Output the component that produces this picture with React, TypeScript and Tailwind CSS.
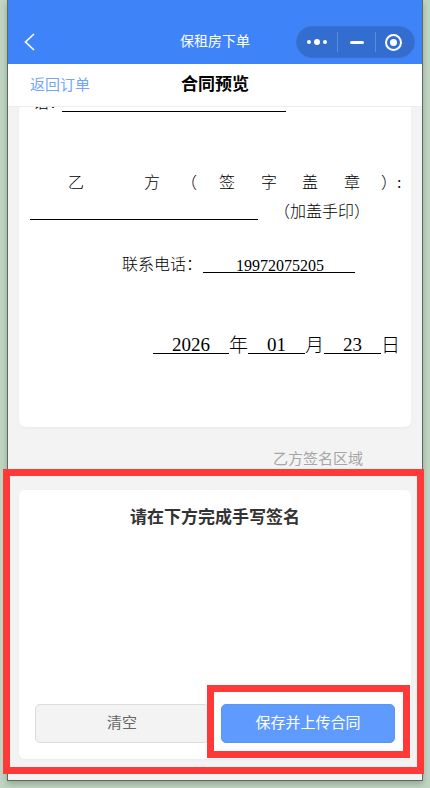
const cjk = "font-['Liberation_Sans','Noto_Sans_CJK_SC',sans-serif]";

export default function App() {
  return (
    <div className={`relative h-[788px] w-[430px] overflow-hidden bg-[#c1d5c3] ${cjk}`}>
      <div className="ml-[7px] flex h-[781px] w-[416px] flex-col border-x border-b border-[#5d685e] bg-[#f3f3f3] shadow-[0_3px_6px_rgba(60,80,60,0.35)]">
        <Header />
        <SubHeader />
        <div className="flex flex-1 flex-col overflow-hidden px-[11px]">
          <Contract />
          <div className="mt-[22px] h-[20px] pl-[254px] text-[15px] leading-[20px] text-[#a6a6a6]">乙方签名区域</div>
          <SignPanel />
        </div>
      </div>
      {/* red annotation boxes */}
      <div className="absolute left-[3px] top-[469px] h-[305px] w-[421px] border-[7px] border-[#ff3838]" />
      <div className="absolute left-[207px] top-[685px] h-[73px] w-[203px] border-[7px] border-[#ff3838]" />
    </div>
  );
}

function Header() {
  return (
    <div className="relative flex h-[64px] shrink-0 items-end justify-center bg-[#3e84f8] pb-[13px] text-white">
      <svg className="absolute left-[15px] top-[33px]" width="14" height="18" viewBox="0 0 14 18" fill="none" stroke="white" strokeWidth="1.6">
        <path d="M11 1 L2.5 9 L11 17" />
      </svg>
      <div className="text-[14px] leading-[20px]">保租房下单</div>
      <div className="absolute left-[288px] top-[26px] flex h-[32px] w-[119px] items-center rounded-full border border-[#3a72d0] bg-[#336dd0]">
        <div className="flex w-[40px] items-center justify-center gap-[3px]">
          <span className="h-[4px] w-[4px] rounded-full bg-white" />
          <span className="h-[6px] w-[6px] rounded-full bg-white" />
          <span className="h-[4px] w-[4px] rounded-full bg-white" />
        </div>
        <span className="h-[20px] w-px bg-[#5b8bdc]" />
        <div className="flex w-[37px] justify-center">
          <span className="h-[3px] w-[14px] rounded-full bg-white" />
        </div>
        <span className="h-[20px] w-px bg-[#5b8bdc]" />
        <div className="flex flex-1 justify-center pr-[4px]">
          <span className="flex h-[17px] w-[17px] items-center justify-center rounded-full border-2 border-white">
            <span className="h-[7px] w-[7px] rounded-full bg-white" />
          </span>
        </div>
      </div>
    </div>
  );
}

function SubHeader() {
  return (
    <div className="relative flex h-[43px] shrink-0 items-center justify-center border-b border-[#ededed] bg-white">
      <div className="absolute left-[22px] text-[15px] text-[#73a5fa]">返回订单</div>
      <div className="text-[17px] font-bold text-black">合同预览</div>
    </div>
  );
}

function Contract() {
  return (
    <div className="h-[320px] shrink-0 overflow-hidden rounded-b-[6px] bg-white pl-[11px] pr-[11px] font-['Liberation_Serif','Noto_Sans_CJK_SC',serif] font-light text-black shadow-[0_1px_3px_rgba(0,0,0,0.04)]">
      {/* the line above is scrolled under the header, only its foot shows */}
      <div className="-mt-[14px] flex h-[20px] items-end text-[16px] leading-[20px]">
        <span className="w-[32px] pl-[3px]">话：</span>
        <span className="mb-[1px] h-px w-[224px] bg-black" />
      </div>
      <div className="mt-[58px] flex h-[24px] text-[16px] leading-[24px]">
        <span className="ml-[38px]">乙</span>
        <span className="ml-[60px]">方</span>
        <span className="ml-[21px]">（</span>
        <span className="ml-[22px]">签</span>
        <span className="ml-[26px]">字</span>
        <span className="ml-[25px]">盖</span>
        <span className="ml-[26px]">章</span>
        <span className="ml-[21px]">）:</span>
      </div>
      <div className="mt-[5px] flex h-[24px] items-end text-[16px] leading-[24px]">
        <span className="mb-[4px] h-px w-[228px] bg-black" />
        <span className="ml-[16px]">（加盖手印）</span>
      </div>
      <div className="mt-[29px] flex h-[24px] items-start pl-[92px] text-[16px] leading-[24px]">
        <span>联系电话：</span>
        <span className="ml-px h-[20px] w-[152px] border-b border-black pl-[33px] leading-[26px]">19972075205</span>
      </div>
      <div className="mt-[60px] flex items-end justify-end text-[19px] leading-[16px]">
        <span className="w-[76px] border-b border-black text-center">2026</span>
        <span>年</span>
        <span className="w-[57px] border-b border-black text-center">01</span>
        <span>月</span>
        <span className="w-[57px] border-b border-black text-center">23</span>
        <span>日</span>
      </div>
    </div>
  );
}

function SignPanel() {
  return (
    <div className="mt-[21px] flex h-[269px] shrink-0 flex-col rounded-[6px] bg-white px-[16px] pb-[16px] shadow-[0_1px_3px_rgba(0,0,0,0.04)]">
      <div className="mt-[17px] text-center text-[17px] font-bold leading-[22px] text-[#333333]">请在下方完成手写签名</div>
      <div className="mt-auto flex gap-[12px]">
        <button className="h-[39px] flex-1 rounded-[5px] border border-[#dcdcdc] bg-[#f3f3f3] text-[15px] text-[#666666]">清空</button>
        <button className="h-[39px] flex-1 rounded-[5px] border border-[#5b94f3] bg-[#5f9bff] text-[15px] text-white">保存并上传合同</button>
      </div>
    </div>
  );
}
